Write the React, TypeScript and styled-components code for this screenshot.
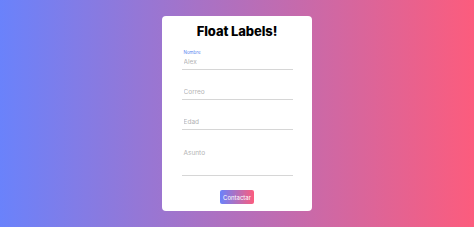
import styled, { createGlobalStyle } from 'styled-components';

const GlobalStyle = createGlobalStyle`
  html, body {
    margin: 0;
    padding: 0;
  }
  body {
    font-family: 'Inter', 'Liberation Sans', sans-serif;
  }
  * {
    box-sizing: border-box;
  }
`;

const Page = styled.div`
  width: 100vw;
  height: 100vh;
  display: flex;
  align-items: center;
  justify-content: center;
  background: linear-gradient(to right, #6a82fb, #fc5c7d);
`;

const Card = styled.div`
  width: 150px;
  height: 195px;
  background: #fff;
  border-radius: 4px;
  padding: 6px 0 7px;
  display: flex;
  flex-direction: column;
  align-items: center;
`;

const Title = styled.h1`
  margin: 0;
  font-size: 13px;
  line-height: 18px;
  font-weight: 800;
  color: #000;
  letter-spacing: -0.1px;
`;

const Form = styled.form`
  width: 111px;
  display: flex;
  flex-direction: column;
`;

const Field = styled.div<{ $gap: number }>`
  display: flex;
  flex-direction: column;
  margin-top: ${({ $gap }) => $gap}px;
`;

const FloatLabel = styled.label`
  font-size: 4.5px;
  line-height: 5px;
  height: 5px;
  color: #5b86f0;
  padding-left: 2px;
`;

const Input = styled.input`
  height: 15px;
  border: none;
  border-bottom: 1px solid #d6d6d6;
  outline: none;
  padding: 0 2px;
  font-family: inherit;
  font-size: 6.5px;
  color: #555;
  background: transparent;

  &::placeholder {
    color: #b3b3b3;
  }
`;

const TextArea = styled.textarea`
  height: 29px;
  border: none;
  border-bottom: 1px solid #d6d6d6;
  outline: none;
  resize: none;
  padding: 2px 2px 0;
  font-family: inherit;
  font-size: 6.5px;
  line-height: 8px;
  background: transparent;

  &::placeholder {
    color: #b3b3b3;
  }
`;

const Button = styled.button`
  align-self: center;
  margin-top: 14px;
  width: 34px;
  height: 14px;
  border: none;
  border-radius: 2px;
  padding: 0;
  background: linear-gradient(to right, #6a82fb, #fc5c7d);
  color: #fff;
  font-family: inherit;
  font-size: 6px;
  cursor: pointer;
`;

export default function App() {
  return (
    <>
      <GlobalStyle />
      <Page>
        <Card>
          <Title>Float Labels!</Title>
          <Form onSubmit={(e) => e.preventDefault()}>
            <Field $gap={10}>
              <FloatLabel htmlFor="nombre">Nombre</FloatLabel>
              <Input id="nombre" placeholder="Alex" />
            </Field>
            <Field $gap={15}>
              <Input placeholder="Correo" />
            </Field>
            <Field $gap={15}>
              <Input placeholder="Edad" />
            </Field>
            <Field $gap={17}>
              <TextArea placeholder="Asunto" />
            </Field>
            <Button type="submit">Contactar</Button>
          </Form>
        </Card>
      </Page>
    </>
  );
}
